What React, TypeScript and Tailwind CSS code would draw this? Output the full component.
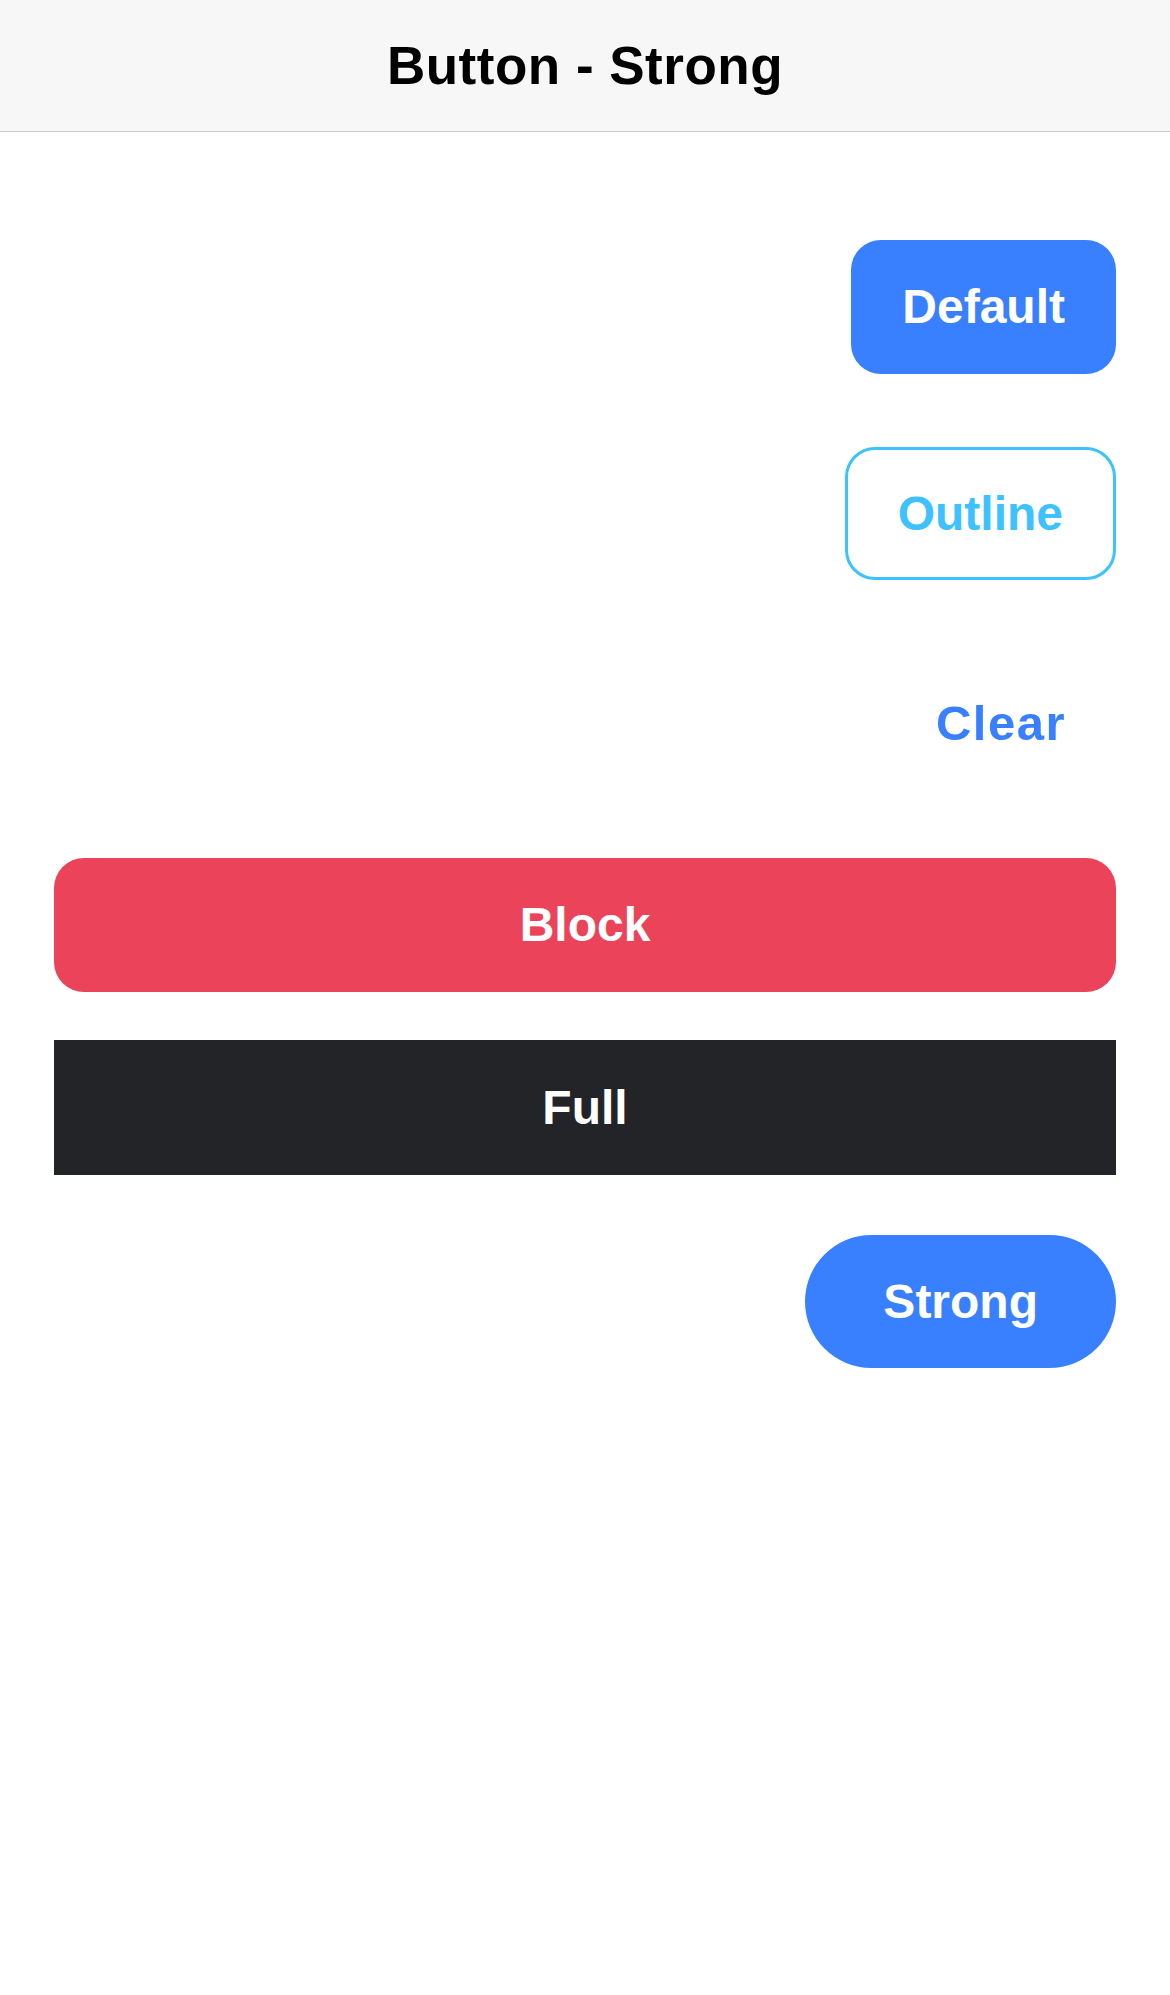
export default function App() {
  const font = { fontFamily: '"Liberation Sans", Arial, sans-serif' };
  return (
    <div className="min-h-[1995px] bg-white" style={font}>
      {/* Toolbar */}
      <header className="h-[132px] bg-[#f7f7f7] border-b border-[#c8c8c8] flex items-center justify-center">
        <h1 className="text-[53px] font-bold tracking-[0.5px] text-black">Button - Strong</h1>
      </header>

      <main className="px-[54px] flex flex-col items-end">
        <button className="mt-[108px] h-[134px] px-[51px] rounded-[30px] bg-[#3880ff] text-white text-[48px] font-bold flex items-center">
          Default
        </button>

        <button className="mt-[73px] h-[133px] px-[50px] rounded-[30px] border-[3px] border-[#3dc2ff] bg-white text-[#3dc2ff] text-[48px] font-bold flex items-center">
          Outline
        </button>

        <button className="mt-[77px] h-[134px] pl-[51px] pr-[50px] tracking-[1.5px] text-[#3880ff] text-[49px] font-bold flex items-center">
          Clear
        </button>

        <button className="mt-[67px] w-full h-[134px] rounded-[30px] bg-[#eb445a] text-white text-[48px] font-bold flex items-center justify-center">
          Block
        </button>

        <button className="mt-[48px] w-full h-[135px] bg-[#222428] text-white text-[48px] font-bold flex items-center justify-center">
          Full
        </button>

        <button className="mt-[60px] h-[133px] px-[78px] rounded-full bg-[#3880ff] text-white text-[48px] font-bold flex items-center">
          Strong
        </button>
      </main>
    </div>
  );
}
